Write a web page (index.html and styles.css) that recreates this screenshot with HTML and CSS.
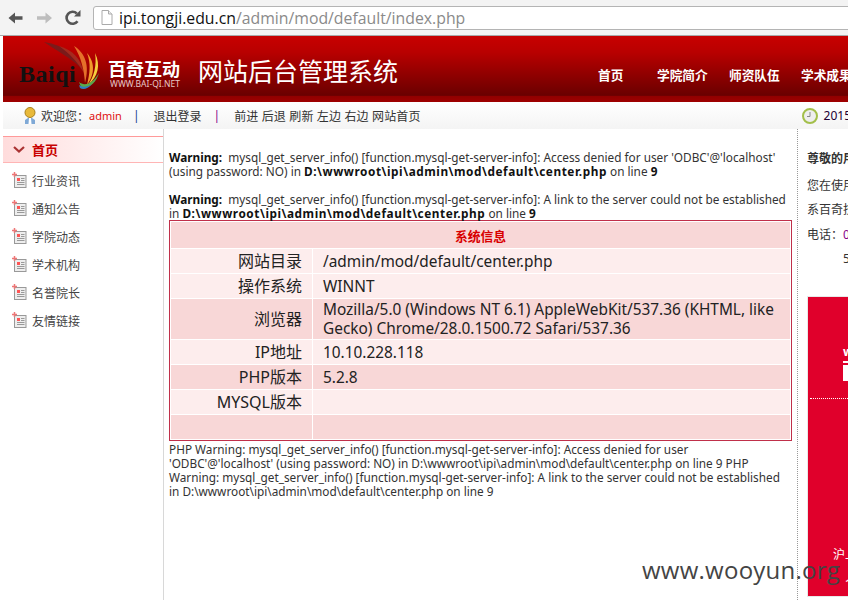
FILE: index.html
```html
<!DOCTYPE html>
<html lang="zh">
<head>
<meta charset="utf-8">
<title>网站后台管理系统</title>
<link rel="stylesheet" href="styles.css">
</head>
<body>
<div class="toolbar">
  <svg class="nav" width="18" height="16" viewBox="0 0 18 16"><path d="M15.500 6.300H8V2.500L1.500 8 8 13.500V9.700h7.500z" fill="#555"/></svg>
  <svg class="nav" width="18" height="16" viewBox="0 0 18 16"><path d="M2 6.300h8.500V2.500L17 8l-6.500 5.500V9.700H2z" fill="#bdbdbd"/></svg>
  <svg class="nav reload" width="16" height="16" viewBox="0 0 16 16"><path d="M12.500 11.200A6 6 0 1 1 11.800 3.500" fill="none" stroke="#555" stroke-width="2.600"/><path d="M9 6.500h6.500V0z" fill="#555"/></svg>
  <div class="omnibox">
    <svg width="12" height="15" viewBox="0 0 12 15"><path d="M1 .5h6.500L11 4v10.500H1z" fill="#fff" stroke="#aaa"/><path d="M7.500.5V4H11" fill="#eee" stroke="#aaa"/></svg>
    <span class="host">ipi.tongji.edu.cn</span><span class="path">/admin/mod/default/index.php</span>
  </div>
</div>
<div class="page">
  <header class="banner">
    <div class="logo">
      <svg class="wing" width="62" height="50" viewBox="0 0 62 50">
        <path d="M1 1C14 3 30 9 38 27 28 17 14 10 1 1z" fill="#7a1a1a"/>
        <path d="M16 5C30 9 38 18 41 32 34 20 26 12 16 5z" fill="#a52a1e"/>
        <path d="M31 5C42 12 47 24 42 42 41 28 38 16 31 5z" fill="#e5702a"/>
        <path d="M44 12C51 20 53 32 44 44 47 32 48 22 44 12z" fill="#f29a2c"/>
        <path d="M52 12C58 24 55 36 45 44 51 36 54 24 52 12z" fill="#f6cf3e"/>
        <path d="M36 41C42 46 50 42 56 32 53 42 46 48 38 46z" fill="#5ba84a"/>
        <path d="M36 44C40 47 45 46 49 43 45 48 40 49 37 47z" fill="#2f7fc0"/>
      </svg>
      <span class="baiqi">Baiqi</span>
      <div class="brand"><span class="brand-cn">百奇互动</span><span class="brand-url">WWW.BAI-QI.NET</span></div>
    </div>
    <div class="title">网站后台管理系统</div>
    <nav class="mainnav"><a class="first">首页</a><a>学院简介</a><a>师资队伍</a><a>学术成果</a></nav>
  </header>
  <div class="subbar">
    <svg class="user" width="14" height="18" viewBox="0 0 14 18"><circle cx="7" cy="5.500" r="5" fill="#e8b93a" stroke="#a8801c"/><path d="M2 17v-4l3-2h4l3 2v4z" fill="#7fa9d6"/><path d="M6 11h2l.5 6h-3z" fill="#fff"/></svg>
    <span class="welcome">欢迎您：</span><span class="admin">admin</span>
    <span class="sep blue">|</span><span class="logout">退出登录</span><span class="sep purple">|</span>
    <span class="links">前进 后退 刷新 左边 右边 网站首页</span>
    <svg class="clock" width="16" height="16" viewBox="0 0 16 16"><circle cx="8" cy="8" r="7" fill="#eee" stroke="#a3bf4a" stroke-width="2"/><path d="M8 4v4.500H5" fill="none" stroke="#888"/></svg>
    <span class="date">2015</span>
  </div>
  <div class="columns">
    <aside class="sidebar">
      <div class="side-head"><svg width="12" height="8" viewBox="0 0 12 8"><path d="M1 1l5 4.500L11 1" fill="none" stroke="#a33" stroke-width="2.200"/></svg><span>首页</span></div>
      <ul class="side-list">
        <li><svg class="doc" width="15" height="16" viewBox="0 0 15 16"><use href="#docicon"/></svg>行业资讯</li>
        <li><svg class="doc" width="15" height="16" viewBox="0 0 15 16"><use href="#docicon"/></svg>通知公告</li>
        <li><svg class="doc" width="15" height="16" viewBox="0 0 15 16"><use href="#docicon"/></svg>学院动态</li>
        <li><svg class="doc" width="15" height="16" viewBox="0 0 15 16"><use href="#docicon"/></svg>学术机构</li>
        <li><svg class="doc" width="15" height="16" viewBox="0 0 15 16"><use href="#docicon"/></svg>名誉院长</li>
        <li><svg class="doc" width="15" height="16" viewBox="0 0 15 16"><use href="#docicon"/></svg>友情链接</li>
      </ul>
    </aside>
    <main class="content">
      <p class="warn"><b class="label">Warning:</b> mysql_get_server_info() [function.mysql-get-server-info]: Access denied for user 'ODBC'@'localhost' (using password: NO) in <b class="file">D:\wwwroot\ipi\admin\mod\default\center.php</b> on line <b>9</b></p>
      <p class="warn second"><b class="label">Warning:</b> mysql_get_server_info() [function.mysql-get-server-info]: A link to the server could not be established in <b class="file">D:\wwwroot\ipi\admin\mod\default\center.php</b> on line <b>9</b></p>
      <table class="info">
        <colgroup><col class="col-k"><col></colgroup>
        <tr class="dark"><th colspan="2">系统信息</th></tr>
        <tr class="light"><td class="k">网站目录</td><td class="v">/admin/mod/default/center.php</td></tr>
        <tr class="light"><td class="k">操作系统</td><td class="v">WINNT</td></tr>
        <tr class="dark tall"><td class="k">浏览器</td><td class="v">Mozilla/5.0 (Windows NT 6.1) AppleWebKit/537.36 (KHTML, like Gecko) Chrome/28.0.1500.72 Safari/537.36</td></tr>
        <tr class="light"><td class="k">IP地址</td><td class="v">10.10.228.118</td></tr>
        <tr class="dark"><td class="k">PHP版本</td><td class="v">5.2.8</td></tr>
        <tr class="light"><td class="k">MYSQL版本</td><td class="v"></td></tr>
        <tr class="dark"><td class="k">&nbsp;</td><td class="v"></td></tr>
      </table>
      <p class="warn tail">PHP Warning: mysql_get_server_info() [function.mysql-get-server-info]: Access denied for user 'ODBC'@'localhost' (using password: NO) in D:\wwwroot\ipi\admin\mod\default\center.php on line 9 PHP Warning: mysql_get_server_info() [function.mysql-get-server-info]: A link to the server could not be established in D:\wwwroot\ipi\admin\mod\default\center.php on line 9</p>
    </main>
    <aside class="notice">
      <div class="n-title">尊敬的用户</div>
      <div class="n-line">您在使用</div>
      <div class="n-line">系百奇技</div>
      <div class="n-line">电话：<span class="n-tel">021</span></div>
      <div class="n-line n-num">5</div>
      <div class="ad">
        <div class="ad-top">w</div>
        <div class="ad-bar"></div>
        <div class="ad-box"></div>
        <div class="ad-dots"></div>
        <div class="ad-foot">沪上</div>
        <div class="ad-foot2">人</div>
      </div>
    </aside>
  </div>
</div>
<div class="watermark">www.wooyun.org</div>
<svg class="defs" width="0" height="0"><defs><g id="docicon"><rect x="2.500" y="3.500" width="11.500" height="12" fill="#eee" stroke="#999"/><rect x="5" y="6" width="3" height="3" fill="#f55"/><path d="M9 6.500h3.500M9 8.500h3.500M5 10.500h7.500M5 12.500h7.500" stroke="#999"/><path d="M0 2.500h5M2.500 0v5" stroke="#e77" stroke-width="1.500"/></g></defs></svg>
</body>
</html>
```

FILE: styles.css
```css
html, body {
  margin: 0;
  padding: 0;
  width: 848px;
  height: 600px;
  overflow: hidden;
  background: #fff;
  font-family: "Noto Sans", "Noto Sans CJK SC", sans-serif;
  color: #222;
}
.toolbar {
  height: 36px;
  box-sizing: border-box;
  background: #f3f3f3;
  border-bottom: 1px solid #a9a9a9;
  display: flex;
  align-items: center;
  gap: 10px;
  padding: 0 0 0 7px;
}
.nav { flex: none; }
.reload { margin-left: 2px; }
.omnibox {
  flex: 1;
  height: 24px;
  margin: 0 -4px 0 2px;
  box-sizing: border-box;
  background: #fff;
  border: 1px solid #b4b4b4;
  border-radius: 3px;
  display: flex;
  align-items: center;
  padding-left: 7px;
  font-size: 15.800px;
  font-family: "Open Sans", sans-serif;
}
.omnibox svg { margin-right: 6px; flex: none; }
.host { color: #111; }
.path { color: #8a8a8a; }
.page { margin-left: 3px; width: 845px; overflow: hidden; }
.banner {
  height: 66px;
  width: 900px;
  display: flex;
  align-items: center;
  color: #fff;
  background: linear-gradient(#c80000 0, #b80000 25%, #6a0000 90%, #900000 91%, #a00000 100%);
}
.logo { position: relative; width: 180px; height: 66px; flex: none; }
.wing { position: absolute; left: 40px; top: 5px; }
.baiqi {
  position: absolute;
  left: 16px;
  top: 25px;
  font: bold 24px "Liberation Serif", serif;
  color: #111;
  letter-spacing: .5px;
}
.brand { position: absolute; left: 105px; top: 23px; display: flex; flex-direction: column; }
.brand-cn { font-size: 18px; line-height: 20px; font-weight: 700; }
.brand-url { font-size: 8.500px; line-height: 11px; margin: -1px 0 0 2px; color: #e8c8c8; white-space: nowrap; }
.title { font-size: 25px; width: 400px; margin: 2px 0 0 15px; flex: none; }
.mainnav { display: flex; font-size: 12.700px; font-weight: 700; margin-top: 10px; }
.mainnav a { width: 72px; flex: none; white-space: nowrap; }
.mainnav a.first { width: 59px; }
.subbar {
  height: 27px;
  width: 900px;
  display: flex;
  align-items: center;
  font-size: 12px;
  color: #333;
  background: linear-gradient(#fff, #f4f4f4);
  white-space: nowrap;
}
.user { margin-left: 20px; margin-right: 4px; flex: none; }
.admin { color: #e01010; font-size: 11px; }
.sep { margin: 0 14px 0 11px; }
.blue { color: #1a3a8a; }
.purple { color: #808; margin: 0 14px 0 12px; }
.links { letter-spacing: .15px; }
.clock { margin-left: 381px; margin-right: 6px; flex: none; }
.date { color: #203; }
.columns { display: flex; align-items: flex-start; height: 471px; width: 900px; }
.sidebar {
  width: 161px;
  height: 471px;
  flex: none;
  box-sizing: border-box;
  border-right: 1px solid #d8d8d8;
  padding-top: 7px;
}
.side-head {
  height: 27px;
  box-sizing: border-box;
  border-top: 1px solid #ff9a9a;
  border-bottom: 1px solid #ffb5b5;
  background: linear-gradient(90deg, #ffdcdc, #fff);
  display: flex;
  align-items: center;
  gap: 7px;
  padding-left: 10px;
  color: #c80000;
  font-size: 13px;
  font-weight: 700;
}
.side-list { list-style: none; margin: 4px 0 0; padding: 0; }
.side-list li {
  height: 28px;
  display: flex;
  align-items: center;
  gap: 5px;
  padding-left: 9px;
  font-size: 12px;
  color: #444;
}
.doc { flex: none; margin-top: -2px; }
.content { width: 633px; flex: none; box-sizing: border-box; padding: 21px 5px 0 5px; }
.warn { margin: 0; font-size: 11.800px; line-height: 14px; color: #333; }
.warn b { color: #111; }
.warn .label { margin-right: 3px; }
.warn .file { letter-spacing: .55px; }
.second { margin-top: 14px; }
.tail { margin-top: 1px; }
.info {
  width: 623px;
  border-collapse: separate;
  border-spacing: 1px;
  border: 1px solid #c0304a;
  font-size: 15.400px;
  color: #222;
  table-layout: fixed;
}
.col-k { width: 141px; }
.info th { font-size: 12.800px; color: #d80000; height: 26px; padding: 0; font-weight: 700; }
.dark td, .dark th { background: #f8d7d7; }
.light td { background: #fdeded; }
.info td { padding: 0; line-height: 19px; height: 24px; }
.info .tall td { height: 40px; }
.info .k { text-align: right; padding-right: 10px; font-size: 16px; white-space: nowrap; }
.info .v { padding-left: 10px; }
.notice {
  width: 200px;
  flex: none;
  box-sizing: border-box;
  height: 471px;
  border-left: 1px dotted #999;
  padding: 21px 0 0 9px;
  font-size: 12px;
  color: #333;
  white-space: nowrap;
}
.n-title { font-weight: 700; height: 24px; line-height: 17px; }
.n-line { height: 24.400px; line-height: 24px; }
.n-tel { color: #808; }
.n-num { padding-left: 36px; }
.ad {
  margin-top: 24px;
  width: 180px;
  height: 301px;
  box-sizing: border-box;
  background: #e0002b;
  border: 1px solid #e8e8e8;
  color: #fff;
  padding-left: 2px;
}
.ad-top { margin: 48px 0 0 33px; font-size: 12px; line-height: 14px; font-weight: 700; }
.ad-bar { margin: 2px 0 0 33px; width: 40px; height: 2px; background: #fff; }
.ad-box { margin: 2px 0 0 33px; width: 30px; height: 16px; background: #fff; }
.ad-dots { border-top: 1px dotted #fff; margin-top: 17px; }
.ad-foot { margin: 148px 0 0 23px; font-size: 12px; line-height: 16px; }
.ad-foot2 { margin: 2px 0 0 35px; font-size: 16px; line-height: 20px; }
.watermark {
  position: absolute;
  left: 642px;
  top: 554px;
  font-family: "Open Sans", sans-serif;
  font-size: 24px;
  line-height: 32px;
  color: #444;
  letter-spacing: .25px;
}
.defs { position: absolute; }
```
